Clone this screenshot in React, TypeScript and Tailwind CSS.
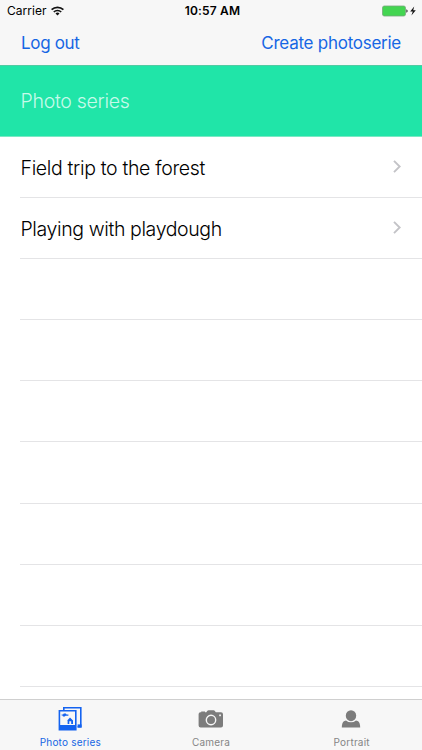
import { useState } from 'react'

const series = ['Field trip to the forest', 'Playing with playdough']

function StatusBar() {
    return (
        <div className="grid h-[22px] grid-cols-3 items-center text-[12px] leading-[14px] text-black">
            <div className="flex items-center gap-[5px] pl-[7px]">
                <span className="tracking-[0.05px]">Carrier</span>
                <svg className="-ml-px" width="13" height="10" viewBox="0 0 13 10" fill="none" stroke="#111" strokeWidth="1.7">
                    <path d="M0.6 3.7A8.4 8.4 0 0 1 12.4 3.7" />
                    <path d="M2.8 6A5.3 5.3 0 0 1 10.2 6" />
                    <path d="M6.5 9.6 4.5 7.6A2.8 2.8 0 0 1 8.5 7.6Z" fill="#111" stroke="none" />
                </svg>
            </div>
            <span className="whitespace-nowrap pl-[3px] text-center font-semibold tracking-[0.15px]">10:57 AM</span>
            <div className="flex items-center justify-end pr-[5px]">
                <svg width="35" height="12" viewBox="0 0 35 12">
                    <rect x="0.5" y="1" width="23" height="10" rx="1.8" fill="#43d551" stroke="#77a77b" strokeWidth="0.8" />
                    <path d="M24.4 4.3C26 4.7 26 7.3 24.4 7.7Z" fill="#222" />
                    <path d="M32.2 1.5 28.2 6.6H30.8L29.4 10.5 33.8 5.2H31.2Z" fill="#111" />
                </svg>
            </div>
        </div>
    )
}

function PhotosIcon() {
    return (
        <svg width="24" height="24" viewBox="0 0 24 24" fill="#1463f0">
            <path d="M5 0H23.6V20.6H19.6V19H22V1.6H6.6V3H5Z" />
            <path d="M19.6 17.4H23.6V20.6H19.6Z" />
            <path fillRule="evenodd" d="M0.6 3H18.6V23.6H0.6ZM2.2 4.6V18H17V4.6Z" />
            <path d="M3.6 7.4H5L5.8 6.6H7.8L8.6 7.4H10.4V8.8H7.6L6.8 9.4H5L4.6 8.6H3.6Z" />
            <path d="M9.2 13.4 12 10.6 15 13.4V17H13.2V14.2H11.3V17H9.6V13.8Z" />
        </svg>
    )
}

function CameraIcon() {
    return (
        <svg className="ml-px" width="26" height="18" viewBox="0 0 26 18" fill="#7c7c7c">
            <path d="M2.4 2.2H3.2V1.5H7V2.2H8.3L9.4.7Q9.8.2 10.5.2H15.6Q16.3.2 16.7.7L17.8 2.2H23Q25 2.2 25 4.2V15.5Q25 17.5 23 17.5H2.6Q.6 17.5.6 15.5V4.2Q.6 2.2 2.4 2.2Z" />
            <circle cx="13" cy="10" r="4.7" fill="none" stroke="#f7f7f7" strokeWidth="1.4" />
            <rect x="21.2" y="4.5" width="1.7" height="1.7" fill="#f7f7f7" />
        </svg>
    )
}

function PersonIcon() {
    return (
        <svg width="20" height="18" viewBox="0 0 20 18" fill="#7c7c7c">
            <path d="M5 10.4Q7.2 12.3 10 12.3T15 10.4L16.6 10.9Q19.2 12 19.2 17.5H.8Q.8 12 3.4 10.9Z" />
            <ellipse cx="10" cy="5.7" rx="5.2" ry="5.5" />
        </svg>
    )
}

const tabs = [
    { name: 'Photo series', icon: <PhotosIcon /> },
    { name: 'Camera', icon: <CameraIcon /> },
    { name: 'Portrait', icon: <PersonIcon /> },
]

export default function App() {
    const [tab, setTab] = useState<string>('Photo series')

    return (
        <div className="flex h-[750px] w-[422px] flex-col overflow-hidden bg-white font-['Inter',sans-serif]">
            <header className="h-[65px] shrink-0 bg-[#f7f7f7]">
                <StatusBar />
                <div className="flex h-[43px] items-center justify-between px-[21px] text-[17px] text-[#1666e4]">
                    <button className="tracking-[-0.32px]">Log out</button>
                    <button className="tracking-[-0.26px]">Create photoserie</button>
                </div>
            </header>

            <div className="flex h-[72px] shrink-0 items-center border-t border-b border-t-[#51cba3] border-b-[#79e9c4] bg-[#20e5a8] pl-[20.5px] pt-[2px]">
                <h1 className="text-[19.5px] font-light tracking-[-0.28px] text-[#c6faea]">Photo series</h1>
            </div>

            <main className="h-[562px] shrink-0 overflow-hidden pl-[20px]">
                {Array.from({ length: 9 }, (_, i) => (
                    <div key={i} className="flex h-[61.1px] items-center justify-between border-b border-[#e4e4e6] pl-[0.5px] pr-[21px] pt-[2px]">
                        <span className={i === 0 ? 'pt-px text-[19.5px] font-light tracking-[-0.33px] text-black' : 'text-[19.5px] font-light tracking-[-0.38px] text-black'}>{series[i]}</span>
                        {series[i] ? (
                            <svg className="mb-[3px]" width="8" height="13" viewBox="0 0 8 13" fill="none" stroke="#c3c3c7" strokeWidth="1.9">
                                <path d="M1 0.8 6.7 6.5 1 12.2" />
                            </svg>
                        ) : null}
                    </div>
                ))}
            </main>

            <nav className="grid h-[51px] shrink-0 grid-cols-3 border-t border-[#cfcfcf] bg-[#f7f7f7]">
                {tabs.map((item) => (
                    <button
                        key={item.name}
                        className={tab === item.name ? 'flex flex-col items-center text-[#1666e4]' : 'flex flex-col items-center text-[#858585]'}
                        onClick={() => setTab(item.name)}
                    >
                        <span className="flex h-[37px] items-center justify-center pt-px pr-px">{item.icon}</span>
                        <span className="text-[10px] leading-[11px] tracking-[0.2px]">{item.name}</span>
                    </button>
                ))}
            </nav>
        </div>
    )
}
